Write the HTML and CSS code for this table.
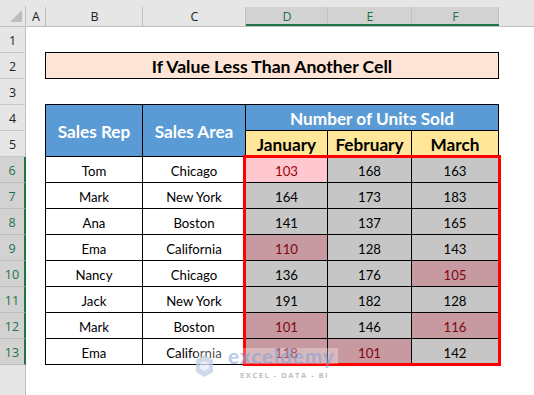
FILE: index.html
```html
<!DOCTYPE html>
<html>
<head>
<meta charset="utf-8">
<link rel="stylesheet" href="styles.css">
</head>
<body>
<div class="sheet">
  <div class="corner"><svg width="26" height="27" viewBox="0 0 26 27"><polygon points="22,10 22,22 10,22" fill="#BDBDBD"/></svg></div>
  <div class="colheads">
    <div class="ch">A</div>
    <div class="ch">B</div>
    <div class="ch">C</div>
    <div class="ch sel">D</div>
    <div class="ch sel">E</div>
    <div class="ch sel">F</div>
    <div class="ch rest"></div>
  </div>
  <div class="rowheads">
    <div class="rh">1</div>
    <div class="rh">2</div>
    <div class="rh">3</div>
    <div class="rh">4</div>
    <div class="rh">5</div>
    <div class="rh sel">6</div>
    <div class="rh sel">7</div>
    <div class="rh sel">8</div>
    <div class="rh sel">9</div>
    <div class="rh sel">10</div>
    <div class="rh sel">11</div>
    <div class="rh sel">12</div>
    <div class="rh sel">13</div>
    <div class="rh-fill"></div>
  </div>
  <div class="canvas">
    <div class="title">If Value Less Than Another Cell</div>
    <div class="table">
      <div class="th blue tall">Sales Rep</div>
      <div class="th blue tall">Sales Area</div>
      <div class="th blue wide">Number of Units Sold</div>
      <div class="th yellow">January</div>
      <div class="th yellow">February</div>
      <div class="th yellow">March</div>

      <div class="td">Tom</div><div class="td">Chicago</div>
      <div class="td num act">103</div><div class="td num">168</div><div class="td num">163</div>

      <div class="td">Mark</div><div class="td">New York</div>
      <div class="td num">164</div><div class="td num">173</div><div class="td num">183</div>

      <div class="td">Ana</div><div class="td">Boston</div>
      <div class="td num">141</div><div class="td num">137</div><div class="td num">165</div>

      <div class="td">Ema</div><div class="td">California</div>
      <div class="td num low">110</div><div class="td num">128</div><div class="td num">143</div>

      <div class="td">Nancy</div><div class="td">Chicago</div>
      <div class="td num">136</div><div class="td num">176</div><div class="td num low">105</div>

      <div class="td">Jack</div><div class="td">New York</div>
      <div class="td num">191</div><div class="td num">182</div><div class="td num">128</div>

      <div class="td">Mark</div><div class="td">Boston</div>
      <div class="td num low">101</div><div class="td num">146</div><div class="td num low">116</div>

      <div class="td">Ema</div><div class="td">California</div>
      <div class="td num low">118</div><div class="td num low">101</div><div class="td num">142</div>

      <div class="selbox"></div>
    </div>
  </div>
  <div class="watermark">
    <div class="wm-top">
      <svg class="wm-logo" width="19" height="24" viewBox="0 0 19 24">
        <polygon points="9.5,1 18,6 18,18 9.5,23 1,18 1,6" fill="#BFCDE6"/>
        <polygon points="9.5,7 14,9.5 14,14.5 9.5,17 5,14.5 5,9.5" fill="#E6ECF6"/>
      </svg>
      <span class="wm-name">exceldemy</span>
    </div>
    <div class="wm-sub">EXCEL - DATA - BI</div>
  </div>
</div>
</body>
</html>
```
FILE: styles.css
```css
* { box-sizing: border-box; }
html, body { margin: 0; padding: 0; background: #fff; }
.sheet {
  position: relative;
  width: 534px;
  height: 395px;
  overflow: hidden;
  display: grid;
  grid-template-columns: 26px 1fr;
  grid-template-rows: 27px 1fr;
  font-family: Lato, "Open Sans", sans-serif;
  color: #000;
}
.corner {
  background: linear-gradient(#BFBFBF, #BFBFBF) right bottom / 1px 20px no-repeat, #E6E6E6;
  border-bottom: 1px solid #BFBFBF;
  line-height: 0;
}
.colheads {
  display: grid;
  grid-template-columns: 20px 97px 103px 82px 84px 87px 1fr;
}
.ch {
  background: linear-gradient(#BFBFBF, #BFBFBF) right bottom / 1px 19px no-repeat, #E6E6E6;
  border-bottom: 1px solid #BFBFBF;
  padding-top: 7px;
  display: flex;
  align-items: center;
  justify-content: center;
  font-family: "Open Sans", "Noto Sans", sans-serif;
  font-size: 12.5px;
  color: #222;
}
.ch.sel {
  background: linear-gradient(#BFBFBF, #BFBFBF) right bottom / 1px 19px no-repeat,
              linear-gradient(#D2D2D2, #D2D2D2) left bottom / 100% 19px no-repeat, #E6E6E6;
  box-shadow: inset 0 -2px 0 #217346;
  color: #217346;
}
.ch.rest { background: #E6E6E6; }
.rowheads {
  display: flex;
  flex-direction: column;
}
.rh {
  height: 26px;
  flex: none;
  background: #E6E6E6;
  border-right: 1px solid #BFBFBF;
  border-bottom: 1px solid #C8C8C8;
  display: flex;
  align-items: center;
  justify-content: center;
  padding-top: 2px;
  font-family: "Open Sans", "Noto Sans", sans-serif;
  font-size: 12.5px;
  color: #222;
}
.rh.sel {
  background: #D2D2D2;
  border-right: 2px solid #217346;
  border-bottom-color: #BDBDBD;
  color: #217346;
}
.rh-fill {
  flex: 1;
  background: #E6E6E6;
  border-right: 1px solid #BFBFBF;
}
.canvas {
  display: grid;
  grid-template-columns: 20px 97px 103px 82px 84px 87px 1fr;
  grid-template-rows: repeat(13, 26px);
}
.title {
  grid-row: 2;
  grid-column: 2 / 7;
  margin: -1px 0 0 -1px;
  border: 1px solid #000;
  background: #FCE4D6;
  display: flex;
  align-items: center;
  justify-content: center;
  font-weight: 700;
  font-size: 17.6px;
  padding-top: 1px;
}
.table {
  position: relative;
  grid-row: 4 / 14;
  grid-column: 2 / 7;
  margin: -1px 0 0 -1px;
  border-left: 1px solid #000;
  border-top: 1px solid #000;
  display: grid;
  grid-template-columns: 97px 103px 82px 84px 87px;
  grid-template-rows: repeat(10, 26px);
}
.th, .td {
  border-right: 1px solid #000;
  border-bottom: 1px solid #000;
  display: flex;
  align-items: center;
  justify-content: center;
  white-space: nowrap;
}
.th {
  font-weight: 700;
  font-size: 17.2px;
  padding-top: 1px;
}
.blue { background: #5B9BD5; color: #fff; }
.yellow { background: #FFE699; color: #000; }
.tall { grid-row: span 2; }
.wide { grid-column: span 3; }
.td {
  font-size: 13.2px;
  background: #fff;
  padding-top: 2px;
}
.td.num { background: #C6C6C6; }
.td.act { background: #FFC7CE; color: #9C0006; }
.td.low { background: #C69AA0; color: #7F0712; }
.selbox {
  position: absolute;
  left: 197px;
  top: 50px;
  width: 258px;
  height: 211px;
  border: 3px solid #FF0000;
  pointer-events: none;
}
.watermark {
  position: absolute;
  left: 195px;
  top: 348px;
  width: 143px;
  pointer-events: none;
}
.wm-top {
  display: flex;
  align-items: flex-start;
  gap: 14px;
  height: 16px;
  background: rgba(255, 255, 255, 0.3);
}
.wm-logo { margin-top: 6px; opacity: 0.75; flex: none; }
.wm-name {
  font-family: Lato, sans-serif;
  font-weight: 700;
  font-size: 21px;
  line-height: 16px;
  letter-spacing: 0.8px;
  color: rgba(125, 155, 215, 0.55);
}
.wm-sub {
  margin: 6px 0 0 45px;
  font-family: "Open Sans", sans-serif;
  font-weight: 700;
  font-size: 7.8px;
  letter-spacing: 1.4px;
  color: rgba(160, 160, 160, 0.7);
  white-space: nowrap;
}
```
